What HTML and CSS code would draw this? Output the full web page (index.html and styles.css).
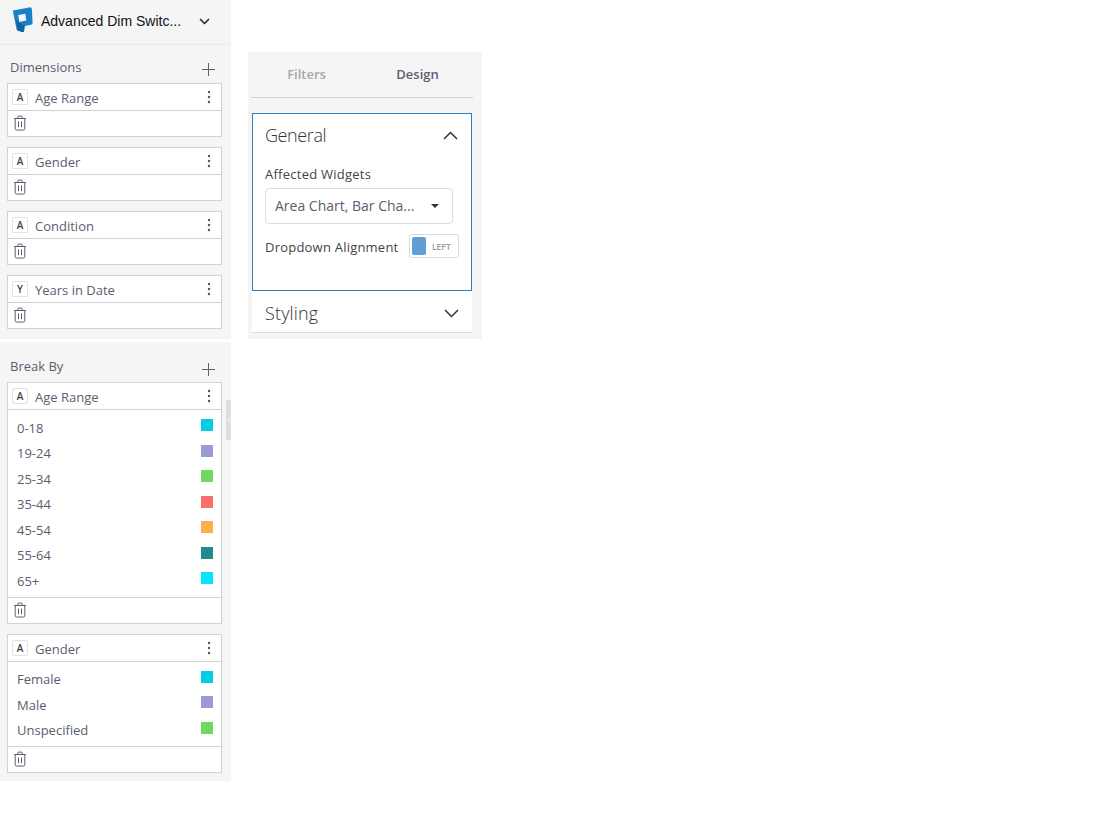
FILE: index.html
```html
<!DOCTYPE html>
<html lang="en">
<head>
<meta charset="utf-8">
<title>Advanced Dim Switcher</title>
<link rel="stylesheet" href="styles.css">
</head>
<body>
<svg class="defs" width="0" height="0" aria-hidden="true">
  <symbol id="trash" viewBox="0 0 14 16">
    <path d="M1 3.5h12M4.8 3.3V1.9c0-.5.3-.8.8-.8h2.8c.5 0 .8.3.8.8v1.4M2.2 3.5v10.3c0 .7.5 1.2 1.2 1.2h7.2c.7 0 1.2-.5 1.2-1.2V3.5M5.5 6.5v5.8M8.5 6.5v5.8" fill="none" stroke="#5a6070" stroke-width="1"/>
  </symbol>
  <symbol id="plus" viewBox="0 0 13 13">
    <path d="M6.5 0v13M0 6.5h13" fill="none" stroke="#5f6368" stroke-width="1"/>
  </symbol>
  <symbol id="dots" viewBox="0 0 4 14">
    <circle cx="2" cy="2" r="1.2" fill="#4f5560"/><circle cx="2" cy="7" r="1.2" fill="#4f5560"/><circle cx="2" cy="12" r="1.2" fill="#4f5560"/>
  </symbol>
</svg>
<div class="app">
  <aside class="sidebar">
    <header class="brand">
      <svg class="logo" width="21" height="27" viewBox="0 0 21 27">
        <path d="M.8 4.4 17.2 1.4c1.6-.3 2.6.5 2.7 2L20.6 16.6c.1 1.3-.6 2-1.8 2.2l-6.2 1.2-.5 4.8c-.1 1-.9 1.5-1.9 1.2L5.6 24.500c-.7-.3-1-.8-1.1-1.500L.8 4.400Z" fill="#1a7fc9"/>
        <path d="M12.600 20l-.5 4.800c-.1 1-.9 1.500-1.900 1.200L5.600 24.500 4 14Z" fill="#0f639f"/>
        <path d="M6.300 9 13.300 7.700 14.300 14.600 7.300 15.900Z" fill="#f2f6fa"/>
      </svg>
      <span class="brand-name">Advanced Dim Switc...</span>
      <svg class="brand-chev" width="11" height="7" viewBox="0 0 11 7"><path d="M1 1l4.500 4.500L10 1" fill="none" stroke="#222" stroke-width="1.500"/></svg>
    </header>

    <section class="section">
      <div class="section-head"><span>Dimensions</span><svg class="plus" width="13" height="13"><use href="#plus"/></svg></div>
      <div class="card">
        <div class="card-head"><span class="type">A</span><span class="card-title">Age Range</span><svg class="dots" width="4" height="14"><use href="#dots"/></svg></div>
        <div class="card-foot"><svg width="14" height="16"><use href="#trash"/></svg></div>
      </div>
      <div class="card">
        <div class="card-head"><span class="type">A</span><span class="card-title">Gender</span><svg class="dots" width="4" height="14"><use href="#dots"/></svg></div>
        <div class="card-foot"><svg width="14" height="16"><use href="#trash"/></svg></div>
      </div>
      <div class="card">
        <div class="card-head"><span class="type">A</span><span class="card-title">Condition</span><svg class="dots" width="4" height="14"><use href="#dots"/></svg></div>
        <div class="card-foot"><svg width="14" height="16"><use href="#trash"/></svg></div>
      </div>
      <div class="card">
        <div class="card-head"><span class="type">Y</span><span class="card-title">Years in Date</span><svg class="dots" width="4" height="14"><use href="#dots"/></svg></div>
        <div class="card-foot"><svg width="14" height="16"><use href="#trash"/></svg></div>
      </div>
    </section>

    <section class="section section-break">
      <div class="section-head"><span>Break By</span><svg class="plus" width="13" height="13"><use href="#plus"/></svg></div>
      <div class="card">
        <div class="card-head"><span class="type">A</span><span class="card-title">Age Range</span><svg class="dots" width="4" height="14"><use href="#dots"/></svg></div>
        <ul class="values">
          <li><span>0-18</span><i class="swatch c1"></i></li>
          <li><span>19-24</span><i class="swatch c2"></i></li>
          <li><span>25-34</span><i class="swatch c3"></i></li>
          <li><span>35-44</span><i class="swatch c4"></i></li>
          <li><span>45-54</span><i class="swatch c5"></i></li>
          <li><span>55-64</span><i class="swatch c6"></i></li>
          <li><span>65+</span><i class="swatch c7"></i></li>
        </ul>
        <div class="card-foot"><svg width="14" height="16"><use href="#trash"/></svg></div>
      </div>
      <div class="card">
        <div class="card-head"><span class="type">A</span><span class="card-title">Gender</span><svg class="dots" width="4" height="14"><use href="#dots"/></svg></div>
        <ul class="values values-compact">
          <li><span>Female</span><i class="swatch c1"></i></li>
          <li><span>Male</span><i class="swatch c2"></i></li>
          <li><span>Unspecified</span><i class="swatch c3"></i></li>
        </ul>
        <div class="card-foot"><svg width="14" height="16"><use href="#trash"/></svg></div>
      </div>
      <div class="collapse-handle"><svg width="4" height="8" viewBox="0 0 4 8"><path d="M3.500.5.5 4l3 3.500" fill="none" stroke="#fff" stroke-width="1"/></svg></div>
    </section>
  </aside>

  <div class="panel">
    <nav class="tabs"><span class="tab">Filters</span><span class="tab tab-active">Design</span></nav>
    <div class="accordion accordion-open">
      <div class="acc-head acc-general"><span>General</span><svg width="15" height="9" viewBox="0 0 15 9"><path d="M1 8l6.500-6.500L14 8" fill="none" stroke="#333" stroke-width="1.500"/></svg></div>
      <label class="field-label">Affected Widgets</label>
      <div class="select"><span>Area Chart, Bar Cha...</span><i class="caret"></i></div>
      <div class="toggle-row">
        <span>Dropdown Alignment</span>
        <div class="toggle"><i class="knob"></i><span class="toggle-text">LEFT</span></div>
      </div>
    </div>
    <div class="accordion accordion-closed">
      <div class="acc-head acc-styling"><span>Styling</span><svg width="15" height="9" viewBox="0 0 15 9"><path d="M1 1l6.500 6.500L14 1" fill="none" stroke="#333" stroke-width="1.500"/></svg></div>
    </div>
  </div>
</div>
</body>
</html>
```
FILE: styles.css
```css
* { box-sizing: border-box; }
html, body { margin: 0; padding: 0; background: #fff; }
body { font-family: "Open Sans", sans-serif; font-size: 13px; color: #5a6070; }
.defs { position: absolute; }
.app { display: flex; align-items: flex-start; }

.sidebar { width: 231px; flex: none; }
.brand { height: 45px; background: #f5f5f5; border-bottom: 1px solid #ebebeb; display: flex; align-items: center; padding-left: 12px; }
.logo { flex: none; margin-top: -5px; }
.brand-name { font-family: "Liberation Sans", Arial, sans-serif; font-size: 14px; color: #111; margin-left: 8px; margin-top: -2px; width: 157px; white-space: nowrap; }
.brand-chev { margin-left: 1px; margin-top: -1px; }

.section { background: #f5f5f5; padding: 0 9px 0 7px; height: 294px; }
.section-break { position: relative; margin-top: 3px; height: 439px; }
.section-head { height: 38px; display: flex; justify-content: space-between; align-items: center; padding: 8px 0 0 3px; line-height: 28px; }
.section-head span { margin-top: -2px; }
.section-break .section-head { height: 40px; }
.section-break .section-head span { margin-top: -1px; }
.plus { margin-right: 7px; margin-top: 3px; }
.section-break .plus { margin-top: 7px; }

.card { background: #fff; border: 1px solid #d2d2d2; margin-bottom: 10px; }
.card-head { height: 27px; border-bottom: 1px solid #d2d2d2; display: flex; align-items: center; padding: 0 10px 0 4px; }
.type { width: 16px; height: 16px; flex: none; border: 1px solid #e2e2e2; border-radius: 2px; font-size: 10px; font-weight: 600; color: #444; display: flex; align-items: center; justify-content: center; background: #fff; }
.card-title { flex: 1; margin-left: 7px; margin-top: 2px; white-space: nowrap; }
.dots { flex: none; }
.card-foot { height: 25px; display: flex; align-items: center; padding-left: 5px; }
.card-foot svg { margin-top: -2px; }

.values { list-style: none; margin: 0; padding: 5.25px 8px 3.25px 9px; border-bottom: 1px solid #d2d2d2; }
.values-compact { padding-top: 4.75px; padding-bottom: 2.75px; }
.values li { height: 25.5px; display: flex; justify-content: space-between; align-items: center; }
.values li span { margin-bottom: .5px; }
.swatch { width: 12px; height: 12px; display: block; margin-top: -6px; }
.c1 { background: #00cee6; }
.c2 { background: #9b9bd7; }
.c3 { background: #6ed95e; }
.c4 { background: #fc6e6e; }
.c5 { background: #fbb04a; }
.c6 { background: #218a8c; }
.c7 { background: #06e5ff; }

.collapse-handle { position: absolute; right: 0; top: 58px; width: 5px; height: 40px; background: #dedede; display: flex; align-items: center; overflow: hidden; padding-left: 2px; }

.panel { width: 234px; height: 287px; margin: 52px 0 0 17px; background: #f5f5f5; padding: 0 10px 0 4px; flex: none; }
.tabs { height: 46px; border-bottom: 1px solid #d2d2d2; display: flex; margin-left: -1px; margin-right: -1px; }
.tab { width: 111px; text-align: center; font-weight: 600; color: #a3a7ae; line-height: 44px; flex: none; }
.tab-active { color: #5a6070; }
.accordion { background: #fff; width: 220px; }
.accordion-open { margin-top: 15px; height: 178px; border: 1px solid #2f7dbd; padding: 0 12px; }
.accordion-closed { height: 42px; padding: 0 13px 0 13px; border-bottom: 1px solid #dcdcdc; overflow: hidden; }
.acc-head { display: flex; justify-content: space-between; align-items: center; font-size: 18px; font-weight: 300; color: #333; height: 43px; padding-right: 1px; }
.acc-head span { margin-top: -2px; }
.acc-general span { letter-spacing: -.4px; }
.acc-styling { padding-right: 0; }
.acc-styling span { letter-spacing: .15px; }
.accordion-closed .acc-head { height: 45px; }
.field-label { display: block; color: #444; line-height: 18px; margin-top: 8px; letter-spacing: .25px; }
.select { width: 188px; height: 36px; margin-top: 5px; border: 1px solid #dcdcdc; border-radius: 4px; display: flex; align-items: center; padding-left: 9px; position: relative; }
.select span { font-size: 14px; color: #5a6070; white-space: nowrap; margin-top: -1px; }
.caret { position: absolute; left: 165px; top: 15px; width: 0; height: 0; border-left: 4px solid transparent; border-right: 4px solid transparent; border-top: 4px solid #333; }
.toggle-row { display: flex; align-items: center; justify-content: space-between; margin-top: 10px; color: #444; width: 194px; }
.toggle-row > span { letter-spacing: .22px; margin-top: 2px; }
.toggle { width: 50px; height: 24px; border: 1px solid #dcdcdc; border-radius: 2px; display: flex; align-items: center; padding-left: 2px; background: #fff; }
.knob { width: 14px; height: 18px; background: #5f9fd5; border-radius: 2px; display: block; flex: none; }
.toggle-text { font-size: 8.5px; color: #999; margin-left: 6px; font-weight: 600; }
```
